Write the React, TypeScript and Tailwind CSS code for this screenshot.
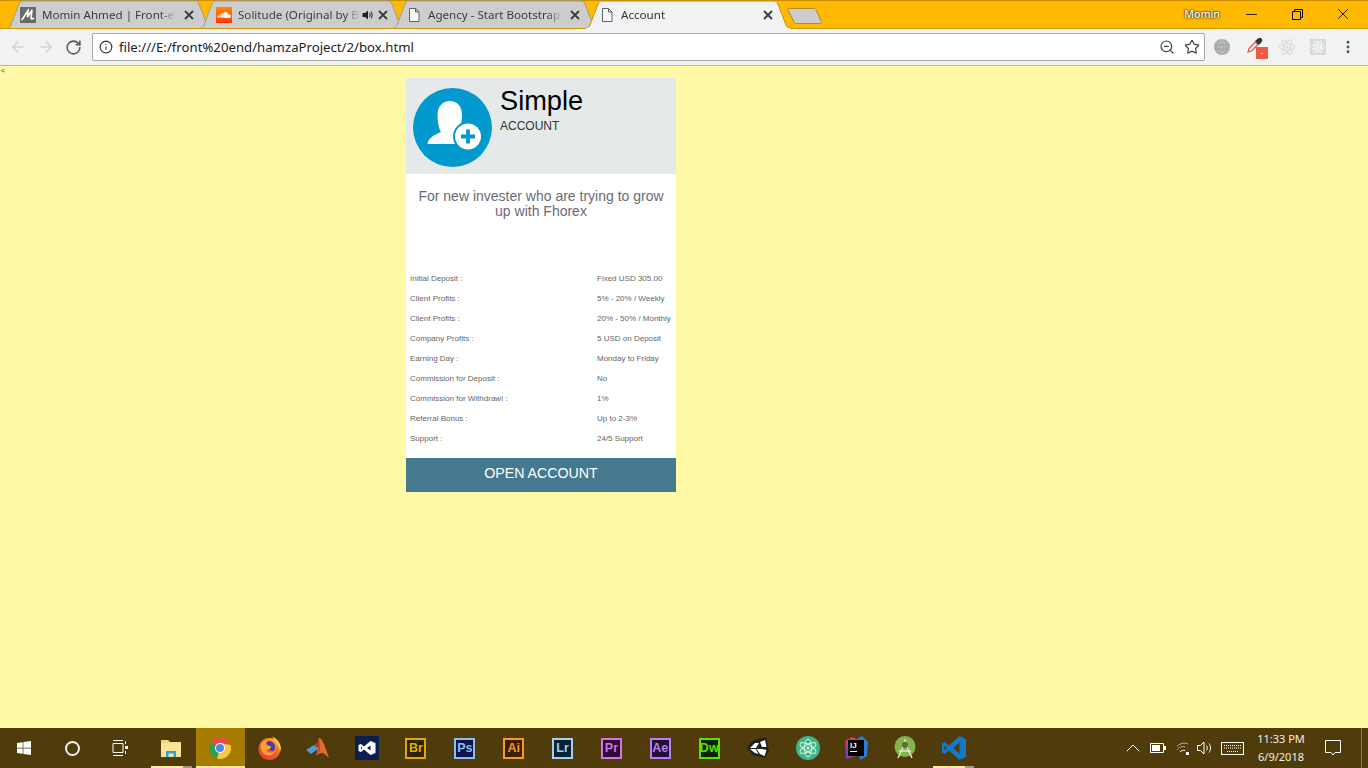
import React from "react";
import { ArrowLeft, ArrowRight, RotateCw, Info, ZoomOut, Star, X, Minus, EllipsisVertical, ChevronUp } from "lucide-react";
import { FaSoundcloud, FaWindows } from "react-icons/fa";

const ui = "font-['Noto_Sans','Open_Sans',sans-serif]";

function TabShape({ active }: { active?: boolean }) {
  return (
    <svg className="absolute left-0 top-0 h-[29px] w-[204px]" viewBox="0 0 204 29">
      <path
        d="M0 28 C2 28 3 27 4 25 L12 4 C13 2 14 1 16 1 H188 C190 1 191 2 192 4 L200 25 C201 27 202 28 204 28"
        fill={active ? "#f2f2f2" : "#cdcdcd"}
        stroke={active ? "#c98f00" : "#9c9c9c"}
        strokeWidth="1"
      />
      {active ? <rect x="0" y="28" width="204" height="1" fill="#f2f2f2" /> : null}
    </svg>
  );
}

function DocIcon() {
  return (
    <svg width="16" height="16" viewBox="0 0 16 16" className="shrink-0">
      <path d="M3.5 1.5 H9.5 L13 5 V14.5 H3.5 Z M9.5 1.5 V5 H13" fill="#f7f7f7" stroke="#5f6368" strokeWidth="1" />
    </svg>
  );
}

function CloseX({ className }: { className: string }) {
  return (
    <svg width="10" height="10" viewBox="0 0 10 10" className={className}>
      <path d="M1 1 L9 9 M9 1 L1 9" stroke="#3c3c3c" strokeWidth="1.8" />
    </svg>
  );
}

function Tab({ active, pad, title, titleW, icon, extra, closeMl, zi, first }: {
  active?: boolean; pad: string; title: string; titleW: string; icon: React.ReactNode; extra?: React.ReactNode; closeMl: string; zi: string; first?: boolean;
}) {
  return (
    <div className={`relative h-[29px] w-[204px] shrink-0 ${first ? "" : "ml-[-11px]"} ${zi}`}>
      <TabShape active={active} />
      <div className={`relative flex h-[30px] items-center ${pad}`}>
        {icon}
        <span className={`ml-[6px] overflow-hidden whitespace-nowrap text-[11.6px] leading-4 ${active ? "text-[#333333]" : "text-[#3c3c3c]"} ${titleW} [mask-image:linear-gradient(to_right,black_88%,transparent)]`}>
          {title}
        </span>
        {extra}
        <CloseX className={closeMl} />
      </div>
    </div>
  );
}

function Tile({ label, border, bg, color }: { label: string; border: string; bg: string; color: string }) {
  return (
    <div className={`flex h-[21px] w-[21px] items-center justify-center border-2 font-['Liberation_Sans',sans-serif] text-[12.5px] font-bold leading-none ${border} ${bg} ${color}`}>
      {label}
    </div>
  );
}

function TaskBtn({ children, active, open, w }: { children: React.ReactNode; active?: boolean; open?: boolean; w?: string }) {
  return (
    <div className={`relative flex h-10 items-center justify-center ${w ?? "w-[48.9px]"} ${active ? "bg-[#a67c00]" : ""}`}>
      {children}
      {active ? <div className="absolute bottom-0 left-0 right-0 h-[2px] bg-[#ffe9a0]" /> : null}
      {open ? (
        <div className="absolute bottom-0 left-[4px] right-[4px] flex h-[2px]">
          <div className="flex-1 bg-[#ffe9a0]" />
          <div className="w-[9px] bg-[#a89a70]" />
        </div>
      ) : null}
    </div>
  );
}

const rows: [string, string][] = [
  ["Initial Deposit :", "Fixed USD 305.00"],
  ["Client Profits :", "5% - 20% / Weekly"],
  ["Client Profits :", "20% - 50% / Monthly"],
  ["Company Profits :", "5 USD on Deposit"],
  ["Earning Day :", "Monday to Friday"],
  ["Commission for Deposit :", "No"],
  ["Commission for Withdrawl :", "1%"],
  ["Referral Bonus :", "Up to 2-3%"],
  ["Support :", "24/5 Support"],
];

export default function App() {
  return (
    <div className="flex h-[768px] w-[1368px] flex-col overflow-hidden bg-[#fff8a5]">
      {/* tab strip */}
      <div className={`relative flex h-[29px] shrink-0 items-start border-t border-t-[#c98f00] bg-[#ffb900] pl-[7px] ${ui}`}>
        <div className="absolute bottom-0 left-0 right-0 h-px bg-[#d39a00]" />
        <div className="mt-[-1px] flex">
          <Tab first zi="z-[1]" pad="pl-[13px]" titleW="w-[134px]" closeMl="ml-[8px]" title="Momin Ahmed | Front-end Developer"
            icon={
              <svg width="16" height="16" viewBox="0 0 16 16" className="shrink-0">
                <rect width="16" height="16" fill="#6a6a6a" />
                <path d="M1.5 13 C4 11 6 6 8 3.5 L7.5 10 L12 3 L11 11 C11 12 12 12.5 14 11" fill="none" stroke="#fff" strokeWidth="1.6" />
              </svg>
            } />
          <Tab zi="z-[2]" pad="pl-[16px]" titleW="w-[122px]" closeMl="ml-[4px]" title="Solitude (Original by Bonobo)"
            icon={
              <div className="flex h-4 w-4 shrink-0 items-center justify-center bg-gradient-to-b from-[#ff8800] to-[#ff3300]">
                <FaSoundcloud className="text-[14px] text-white" />
              </div>
            }
            extra={
              <svg width="12" height="12" viewBox="0 0 12 12" className="ml-[2px] shrink-0">
                <path d="M0.5 4 H3 L6 1.5 V10.5 L3 8 H0.5 Z" fill="#222" />
                <path d="M7.5 4 C8.3 5 8.3 7 7.5 8 M9 2.5 C10.5 4.5 10.5 7.5 9 9.5" fill="none" stroke="#222" strokeWidth="1" />
              </svg>
            } />
          <Tab zi="z-[3]" pad="pl-[13px]" titleW="w-[135px]" closeMl="ml-[7px]" title="Agency - Start Bootstrap Theme" icon={<DocIcon />} />
          <Tab active zi="z-[4]" pad="pl-[13px]" titleW="w-[135px]" closeMl="ml-[7px]" title="Account" icon={<DocIcon />} />
        </div>
        <svg width="36" height="18" viewBox="0 0 36 18" className="ml-[-3px] mt-[6px] shrink-0">
          <path d="M1.5 1.5 H27 C28 1.5 28.5 2 29 3 L34.5 15 C35 16 34.5 16.5 33.5 16.5 H9 C8 16.5 7.5 16 7 15 L1 3 C0.7 2 1 1.5 1.5 1.5 Z" fill="#cdcdcd" stroke="#b58a1a" />
        </svg>
        <div className="ml-auto flex h-[26px] items-center">
          <span className="mt-[2px] text-[10.6px] font-medium text-white [text-shadow:0_0_2px_#222,0_0_2px_#222]">Momin</span>
          <Minus className="ml-[23px] h-[17px] w-[17px] text-black" strokeWidth={1.1} />
          <svg width="11" height="11" viewBox="0 0 11 11" className="ml-[32px]">
            <path d="M0.5 2.5 H8.5 V10.5 H0.5 Z M2.5 2.5 V0.5 H10.5 V8.5 H8.5" fill="none" stroke="#000" strokeWidth="1" />
          </svg>
          <X className="ml-[31px] mr-[16px] h-[18px] w-[18px] text-black" strokeWidth={1.1} />
        </div>
      </div>

      {/* toolbar */}
      <div className={`z-[5] flex h-[37px] shrink-0 items-center border-b border-b-[#b4b4b4] bg-[#f2f2f2] ${ui}`}>
        <ArrowLeft className="ml-[9px] h-[18px] w-[18px] text-[#d4d4d4]" strokeWidth={2} />
        <ArrowRight className="ml-[10px] h-[18px] w-[18px] text-[#d4d4d4]" strokeWidth={2} />
        <RotateCw className="ml-[10px] h-[17px] w-[17px] text-[#5a5a5a]" strokeWidth={2.2} />
        <div className="mb-px ml-[10px] flex h-[28px] w-[1113px] items-center rounded-[2px] border border-[#a9a9a9] bg-white">
          <Info className="ml-[6px] h-[14px] w-[14px] text-[#333333]" strokeWidth={2} />
          <span className="ml-[6px] text-[13.2px] leading-4 text-[#222222]">file:///E:/front%20end/hamzaProject/2/box.html</span>
          <ZoomOut className="ml-auto h-[16px] w-[16px] text-[#444444]" strokeWidth={1.8} />
          <Star className="ml-[9px] mr-[4px] h-[16px] w-[16px] text-[#444444]" strokeWidth={1.8} />
        </div>
        <svg width="16" height="16" viewBox="0 0 16 16" className="ml-[9px]">
          <circle cx="8" cy="8" r="8" fill="#a8a8a8" />
          <path d="M0 8 H16 M8 0 V16 M2 3.5 H14 M2 12.5 H14 M8 0 C4 3 4 13 8 16 M8 0 C12 3 12 13 8 16" fill="none" stroke="#c2c2c2" strokeWidth="0.7" />
        </svg>
        <div className="relative ml-[17px] h-[20px] w-[20px]">
          <svg width="16" height="16" viewBox="0 0 16 16" className="absolute left-0 top-0">
            <path d="M1 15 L2 11.5 L8.5 5 L11 7.5 L4.5 14 Z" fill="#f2f2f2" stroke="#d9534a" strokeWidth="1.2" />
            <path d="M8 4 L11 1.5 C12 0.5 13.5 0.5 14.5 1.5 C15.5 2.5 15.5 4 14.5 5 L12 8 Z" fill="#333" />
          </svg>
          <div className="absolute left-[9px] top-[10px] flex h-[12px] w-[12px] items-center justify-center rounded-[1px] bg-[#ee5a45] text-[8px] leading-none text-white">-</div>
        </div>
        <svg width="18" height="18" viewBox="-9 -9 18 18" className="ml-[11px]">
          <g fill="none" stroke="#dcdcdc" strokeWidth="1.1">
            <ellipse rx="8" ry="3.2" />
            <ellipse rx="8" ry="3.2" transform="rotate(60)" />
            <ellipse rx="8" ry="3.2" transform="rotate(120)" />
          </g>
          <circle r="1.5" fill="#dcdcdc" />
        </svg>
        <div className="ml-[14px] flex h-4 w-4 items-center justify-center bg-[#d8d8d8]">
          <svg width="14" height="14" viewBox="-9 -9 18 18">
            <g fill="none" stroke="#f4f4f4" strokeWidth="1.4">
              <ellipse rx="8" ry="3.2" />
              <ellipse rx="8" ry="3.2" transform="rotate(60)" />
              <ellipse rx="8" ry="3.2" transform="rotate(120)" />
            </g>
            <circle r="1.8" fill="#f4f4f4" />
          </svg>
        </div>
        <EllipsisVertical className="ml-[14px] h-[16px] w-[16px] text-[#555555]" strokeWidth={2.4} />
      </div>

      {/* page */}
      <main className="relative min-h-0 flex-1 font-['Liberation_Sans',sans-serif]">
        <div className="h-0 pl-px text-[7px] leading-[10px] text-[#444444]">&lt;</div>
        <section className="ml-[406px] mt-[12px] w-[270px] bg-white">
          <header className="flex h-[96px] bg-[#e6e9ea] pl-[7px] pt-[10px]">
            <div className="relative h-[79px] w-[79px] shrink-0 rounded-full bg-[#0299cf]">
              <svg width="79" height="79" viewBox="0 0 79 79" className="absolute left-0 top-0">
                <path d="M14.5 56 C15 51 20 47 28 44 C25.5 40 24.5 33 24.5 27 C24.5 18 30 13 37 13 C44 13 49 18 49 27 C49 33 48 38 45 43 L54 48 L42 56 Z" fill="#fff" />
                <circle cx="55" cy="48.5" r="15" fill="#0299cf" />
                <circle cx="55" cy="48.5" r="13" fill="#fff" />
                <path d="M55 41.5 V55.5 M48 48.5 H62" stroke="#0299cf" strokeWidth="3.8" />
              </svg>
            </div>
            <div className="ml-[8px]">
              <div className="mt-[-3px] text-[27.2px] leading-[31px] text-black">Simple</div>
              <div className="mt-[3px] text-[12px] leading-[14px] text-[#333333]">ACCOUNT</div>
            </div>
          </header>
          <p className="px-[8px] pt-[15px] text-center text-[14px] leading-[15px] text-[#6c6a78]">
            For new invester who are trying to grow up with Fhorex
          </p>
          <div className="pb-[9px] pt-[50px]">
            {rows.map(([a, b], i) => (
              <div key={i} className="grid h-5 grid-cols-[187px_1fr] items-center pl-[4px] text-[8px] leading-[10px] text-[#666666]">
                <span>{a}</span>
                <span className="whitespace-nowrap">{b}</span>
              </div>
            ))}
          </div>
          <div className="flex h-[34px] items-center justify-center bg-[#457990] pb-[2px] text-[14.2px] text-white">OPEN ACCOUNT</div>
        </section>
      </main>

      {/* taskbar */}
      <footer className={`flex h-10 shrink-0 items-center bg-[#503c0b] ${ui}`}>
        <TaskBtn w="w-[48px]"><FaWindows className="text-[16px] text-white" /></TaskBtn>
        <TaskBtn w="w-[48px]"><div className="h-[15px] w-[15px] rounded-full border-2 border-[#eeeeee]" /></TaskBtn>
        <TaskBtn w="w-[51px]">
          <svg width="16" height="16" viewBox="0 0 16 16" className="mr-[3px]">
            <path d="M1 0.5 H11 M1 15.5 H11 M1 3.5 H11 V12.5 H1 Z" fill="none" stroke="#fff" strokeWidth="1" />
            <rect x="13" y="6" width="3" height="3" fill="#fff" />
            <rect x="13" y="1" width="1" height="3" fill="#fff" />
            <rect x="13" y="11" width="1" height="3" fill="#fff" />
          </svg>
        </TaskBtn>
        <TaskBtn open>
          <svg width="22" height="20" viewBox="0 0 22 20">
            <path d="M1 2 H8 L10 4 H21 V19 H1 Z" fill="#f5d77a" />
            <rect x="1" y="5" width="20" height="14" fill="#f9e29a" />
            <path d="M6 19 V13 H16 V19 H13.5 V15.5 H8.5 V19 Z" fill="#2aa7e0" />
          </svg>
        </TaskBtn>
        <TaskBtn active>
          <svg width="22" height="22" viewBox="0 0 22 22">
            <circle cx="11" cy="11" r="11" fill="#de5246" />
            <path d="M11 11 L1.5 5.5 A11 11 0 0 0 8 21.6 Z" fill="#2f9e4f" />
            <path d="M11 11 L8 21.6 A11 11 0 0 0 21.6 8 L11 6 Z" fill="#f6c93b" />
            <circle cx="11" cy="11" r="5" fill="#fff" />
            <circle cx="11" cy="11" r="4" fill="#4f86ec" />
          </svg>
        </TaskBtn>
        <TaskBtn>
          <svg width="23" height="24" viewBox="0 0 23 24">
            <defs>
              <linearGradient id="ffx" x1="0.8" y1="0" x2="0.2" y2="1">
                <stop offset="0" stopColor="#ffb52c" />
                <stop offset="0.5" stopColor="#f4622a" />
                <stop offset="1" stopColor="#e23a3c" />
              </linearGradient>
            </defs>
            <circle cx="11.5" cy="13" r="11" fill="url(#ffx)" />
            <path d="M14 0.5 C20 3 24 9 22.5 15 C21 10 18 6 14 0.5 Z" fill="#ffd02e" />
            <path d="M7 6 C9 4.5 13 4.5 15.5 7 C17.5 9 17.5 13 15 15 L10 14 Z" fill="#4a3ab5" />
            <path d="M3 8 C5 5 8 4 10 5 C8 6.5 7.5 8 9 9 L13 10.5 C13 13 10 14.5 8 13.5 C9 17 14 18 17 15 C15.5 20 8 21 5 17 C3 14 2.5 11 3 8 Z" fill="#ffa32c" />
          </svg>
        </TaskBtn>
        <TaskBtn>
          <svg width="24" height="22" viewBox="0 0 24 22">
            <path d="M0 13 L8 8 L13 11 L5 17 Z" fill="#4a9fd8" />
            <path d="M13 1 C15 1 16 3 18 7 C20 12 22 18 23 21 C20 18 18 16 16 16 C14 16 12 17 10 19 L12 9 Z" fill="#e36a2b" />
            <path d="M13 1 C12 5 10 8 8 8 L13 11 L10 19 C12 17 13 15 14 12 Z" fill="#b8402a" />
          </svg>
        </TaskBtn>
        <TaskBtn>
          <div className="flex h-6 w-6 items-center justify-center bg-[#0a1f4d]">
            <svg width="18" height="14" viewBox="0 0 18 14">
              <path d="M0.5 4 L3 3 L6 5.5 L12.5 0 L17.5 2 V12 L12.5 14 L6 8.5 L3 11 L0.5 10 Z M12.5 4.5 L9 7 L12.5 9.5 Z M3 5.5 V8.5 L4.5 7 Z" fill="#fff" fillRule="evenodd" />
            </svg>
          </div>
        </TaskBtn>
        <TaskBtn><Tile label="Br" border="border-[#e0a800]" bg="bg-[#2c2300]" color="text-[#e8ac00]" /></TaskBtn>
        <TaskBtn><Tile label="Ps" border="border-[#8fbde6]" bg="bg-[#0e1350]" color="text-[#8fbde6]" /></TaskBtn>
        <TaskBtn><Tile label="Ai" border="border-[#f59a23]" bg="bg-[#3d1e00]" color="text-[#f59a23]" /></TaskBtn>
        <TaskBtn><Tile label="Lr" border="border-[#a6d2e6]" bg="bg-[#0b2230]" color="text-[#a6d2e6]" /></TaskBtn>
        <TaskBtn><Tile label="Pr" border="border-[#d277dc]" bg="bg-[#2a0b3a]" color="text-[#d277dc]" /></TaskBtn>
        <TaskBtn><Tile label="Ae" border="border-[#bb80e6]" bg="bg-[#1f103c]" color="text-[#bb80e6]" /></TaskBtn>
        <TaskBtn><Tile label="Dw" border="border-[#60e000]" bg="bg-[#0a2400]" color="text-[#60e000]" /></TaskBtn>
        <TaskBtn>
          <svg width="22" height="22" viewBox="0 0 22 22">
            <path d="M0 11 L5 4 L19 0 L22 13 L18 21 L6 18 Z" fill="#222" />
            <path d="M3 11 L8 6 H12 L9 11 H3 Z M13 5 L18 3 L19.5 10 L15 10 L13 5 Z M9.5 12 L15 12 L19.5 13 L17.5 19 L13 17 Z M3 12 L8.5 12 L11.5 17 L8 16 Z" fill="#fff" />
          </svg>
        </TaskBtn>
        <TaskBtn>
          <svg width="24" height="24" viewBox="-12 -12 24 24" className="ml-[2px]">
            <circle r="12" fill="#3fb58c" />
            <g fill="none" stroke="#d7f3e6" strokeWidth="1">
              <ellipse rx="9" ry="3.5" transform="rotate(30)" />
              <ellipse rx="9" ry="3.5" transform="rotate(90)" />
              <ellipse rx="9" ry="3.5" transform="rotate(150)" />
            </g>
            <circle r="1.5" fill="#d7f3e6" />
          </svg>
        </TaskBtn>
        <TaskBtn>
          <div className="relative h-[24px] w-[24px]">
            <svg width="24" height="24" viewBox="0 0 24 24" className="absolute left-0 top-0">
              <path d="M1 5 L8 1 L13 3 L6 14 L3 11 Z" fill="#e8336b" />
              <path d="M13 3 L18 0 L24 6 L23 20 L16 24 Z" fill="#2f78e0" />
              <path d="M1 8 L2 23 L12 20 Z" fill="#8a3fb0" />
            </svg>
            <div className="absolute left-[4px] top-[4px] h-[16px] w-[16px] bg-black pl-[2px] pt-[1px] font-['Liberation_Sans',sans-serif] text-[8px] font-bold leading-[9px] text-white">
              IJ
              <div className="mt-[1px] h-px w-[7px] bg-white" />
            </div>
          </div>
        </TaskBtn>
        <TaskBtn>
          <svg width="24" height="24" viewBox="0 0 24 24">
            <circle cx="12" cy="10.5" r="10.5" fill="#84b54a" />
            <path d="M12 3 V7 M12 7 L5 22 M12 7 L19 22 M6 15 H18" fill="none" stroke="#dfe8cf" strokeWidth="1.5" />
            <circle cx="12" cy="9" r="3" fill="#55703a" />
          </svg>
        </TaskBtn>
        <TaskBtn open>
          <svg width="24" height="24" viewBox="0 0 24 24">
            <path d="M17.5 0 L24 3 V21 L17.5 24 L7 14.5 L2.5 18 L0 16.5 V7.5 L2.5 6 L7 9.5 Z M17.5 6.5 L11 12 L17.5 17.5 Z M2.5 9.5 V14.5 L5 12 Z" fill="#1279c6" fillRule="evenodd" />
          </svg>
        </TaskBtn>

        <div className="ml-auto flex items-center text-white">
          <ChevronUp className="h-[24px] w-[24px]" strokeWidth={1} />
          <svg width="16" height="10" viewBox="0 0 16 10" className="ml-[5px]">
            <path d="M0.5 0.5 H13.5 V9.5 H0.5 Z" fill="none" stroke="#fff" />
            <rect x="2" y="2" width="8" height="6" fill="#fff" />
            <rect x="14" y="3" width="2" height="4" fill="#fff" />
          </svg>
          <svg width="14" height="13" viewBox="0 0 14 13" className="ml-[10px]">
            <g fill="none" stroke="#b9b29a" strokeWidth="1">
              <path d="M1 8 C3 5 6 4 9 5" />
              <path d="M1 4.5 C4 1 9 0.5 12 2" />
              <path d="M4 10 C5 8.5 7 8 9 8.5" stroke="#fff" />
            </g>
            <rect x="10" y="10" width="3" height="3" fill="#fff" />
          </svg>
          <svg width="16" height="14" viewBox="0 0 16 14" className="ml-[7px]">
            <path d="M0.5 4.5 H3.5 L7 1 V13 L3.5 9.5 H0.5 Z" fill="none" stroke="#fff" />
            <path d="M9.5 4.5 C10.5 6 10.5 8 9.5 9.5 M12 2.5 C14 5 14 9 12 11.5" fill="none" stroke="#fff" />
          </svg>
          <svg width="23" height="13" viewBox="0 0 23 13" className="ml-[8px]">
            <rect x="0.5" y="0.5" width="22" height="12" fill="none" stroke="#fff" />
            <path d="M3 3.5 H20 M3 6 H20 M6 9.5 H17" stroke="#fff" strokeWidth="1" strokeDasharray="1 1" />
          </svg>
          <div className="ml-[7px] w-[60px] text-center text-[11px] leading-[18px] text-[#f4f0e0]">
            <div>11:33 PM</div>
            <div>6/9/2018</div>
          </div>
          <svg width="16" height="16" viewBox="0 0 16 16" className="ml-[14px]">
            <path d="M0.5 0.5 H15.5 V12.5 H10 L8 15 L6 12.5 H0.5 Z" fill="none" stroke="#fff" />
          </svg>
          <div className="ml-[20px] h-10 w-px bg-[#8a7a50]" />
          <div className="w-[6px]" />
        </div>
      </footer>
    </div>
  );
}
